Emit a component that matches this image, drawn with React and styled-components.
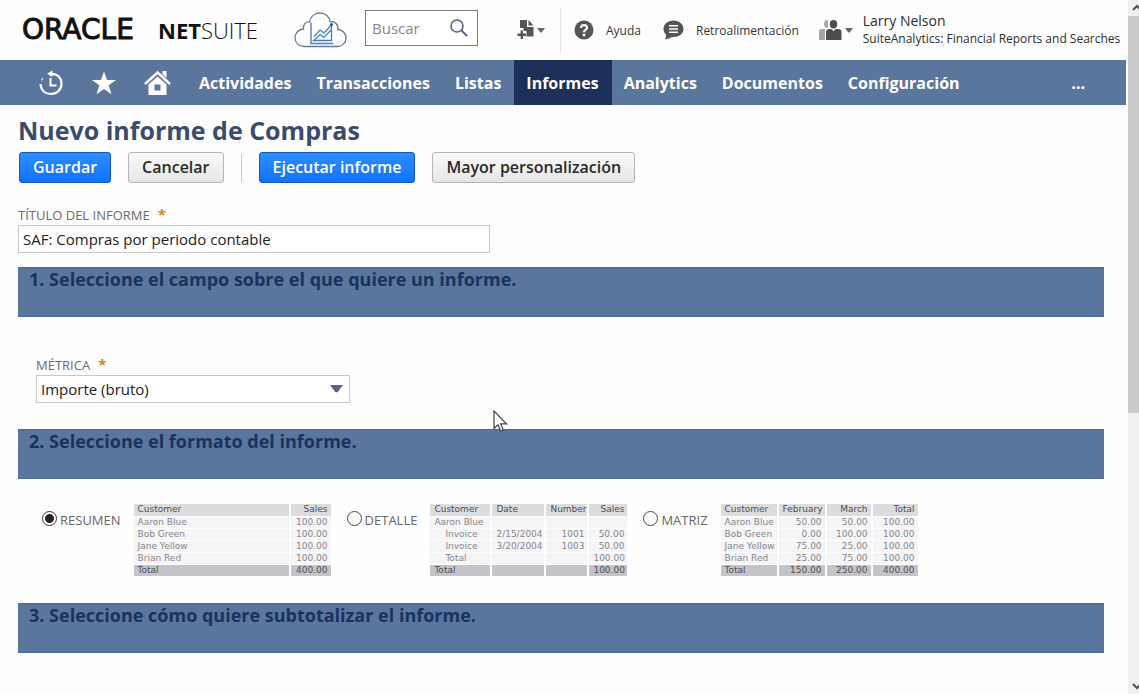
import React, { useState } from "react";
import styled, { createGlobalStyle, css } from "styled-components";

const BAR = "#5b769d";
const NAVY = "#1b3160";

const GlobalStyle = createGlobalStyle`
  * { box-sizing: border-box; }
  body {
    margin: 0;
    background: #fefefe;
    color: #333;
    font-family: "Open Sans", "Noto Sans", sans-serif;
    font-size: 15px;
  }
  button, input, select { font-family: inherit; }
`;

const Page = styled.div`
  display: flex;
  min-height: 100vh;
`;

const Content = styled.div`
  flex: 1;
  min-width: 0;
`;

const Header = styled.header`
  display: flex;
  align-items: center;
  height: 60px;
  padding-left: 22px;
  white-space: nowrap;
`;

const Logo = styled.a`
  display: flex;
  align-items: center;
  width: 272px;
  color: #111;
  text-decoration: none;
  line-height: 30px;
`;

const Oracle = styled.span`
  width: 136px;
  font-family: "DejaVu Sans", sans-serif;
  font-size: 28px;
  -webkit-text-stroke: 1px #111;
`;

const NetSuite = styled.span`
  font-size: 22px;
  font-weight: 300;
  strong { font-weight: 700; }
`;

const SearchBox = styled.label`
  display: flex;
  align-items: center;
  width: 113px;
  height: 36px;
  margin: 0 0 4px 18px;
  padding: 0 8px 0 6px;
  border: 1px solid #7c7c7c;
  background: #fff;
`;

const SearchInput = styled.input`
  flex: 1;
  min-width: 0;
  padding: 0;
  border: 0;
  outline: 0;
  background: none;
  font-size: 15px;
  &::placeholder { color: #858585; opacity: 1; }
`;

const IconButton = styled.button`
  display: flex;
  align-items: center;
  gap: 3px;
  padding: 0;
  border: 0;
  background: none;
  color: #555;
`;

const CreateButton = styled(IconButton)`
  margin-left: 39px;
`;

const HeaderLink = styled.a`
  display: flex;
  align-items: center;
  gap: 12px;
  height: 46px;
  color: #333;
  font-size: 12px;
  text-decoration: none;
  svg { color: #555; }
`;

const HelpLinks = styled.div`
  display: flex;
  gap: 22px;
  margin-left: 15px;
  padding-left: 13px;
  border-left: 1px solid #e6e6ea;
`;

const User = styled.div`
  display: flex;
  align-items: center;
  gap: 10px;
  margin-left: 20px;
`;

const UserText = styled.div`
  font-size: 12px;
  line-height: 18px;
  color: #2c2c2c;
`;

const UserName = styled.div`
  font-size: 14px;
`;

const Nav = styled.nav`
  display: flex;
  align-items: center;
  height: 45px;
  margin-right: 1px;
  padding-left: 38px;
  background: ${BAR};
  color: #fff;
`;

const NavIcons = styled.div`
  display: flex;
  gap: 28px;
  margin-right: 16px;
`;

const NavIconLink = styled.a`
  display: flex;
  color: #fff;
`;

const NavLink = styled.a`
  padding: 2px 13px 0 12px;
  line-height: 43px;
  font-size: 16px;
  font-weight: 700;
  color: #fff;
  text-decoration: none;
  ${({ $active }) => $active && css`background: #1c3059;`}
`;

const MoreLink = styled(NavLink)`
  margin-left: auto;
  padding: 2px 41px 0;
`;

const Main = styled.main`
  padding: 8px 23px 0 18px;
`;

const Title = styled.h1`
  margin: 0;
  font-size: 25px;
  line-height: 35px;
  font-weight: 700;
  color: #3a4b6c;
`;

const Actions = styled.div`
  display: flex;
  align-items: center;
  gap: 17px;
  margin: 4px 0 22px;
  padding-left: 1px;
`;

const Button = styled.button`
  height: 31px;
  padding: 0 13px;
  border: 1px solid #b5b5b5;
  border-radius: 3px;
  background: linear-gradient(#fafafa, #e5e5e5);
  color: #2a2a2a;
  font-size: 16px;
  font-weight: 600;
  line-height: 29px;
  ${({ $primary }) => $primary && css`
    border-color: #125ab2;
    background: linear-gradient(#2f8cff, #0f72fb);
    color: #fff;
  `}
`;

const Divider = styled.span`
  width: 1px;
  height: 28px;
  background: #c4c4c4;
`;

const Field = styled.div`
  display: flex;
  flex-direction: column;
  align-items: flex-start;
`;

const FieldLabel = styled.label`
  line-height: 20px;
  font-size: 13px;
  color: #6b6b6b;
`;

const Required = styled.span`
  margin-left: 8px;
  color: #cf8618;
  font-weight: 700;
  font-size: 15px;
  line-height: 16px;
`;

const TextInput = styled.input`
  width: 472px;
  max-width: 100%;
  height: 28px;
  margin-bottom: 14px;
  padding: 0 4px;
  border: 1px solid #c9c9cb;
  background: #fff;
  color: #222;
  font-size: 15px;
`;

const SelectWrap = styled.div`
  display: grid;
  align-items: center;
  width: 314px;
  max-width: 100%;
  > * { grid-area: 1 / 1; }
  svg { justify-self: end; margin-right: 7px; pointer-events: none; }
`;

const Select = styled.select`
  width: 100%;
  height: 28px;
  padding: 0 4px;
  appearance: none;
  border: 1px solid #c9c9cb;
  border-radius: 0;
  background: #fff;
  color: #222;
  font-size: 15px;
`;

const SectionBar = styled.h2`
  height: 50px;
  margin: 0;
  padding-left: 11px;
  background: ${BAR};
  border-top: 1px solid #4c6690;
  border-bottom: 1px solid #4a6a97;
  color: ${NAVY};
  font-size: 18px;
  font-weight: 700;
  line-height: 23px;
`;

const MetricBody = styled.div`
  padding: 38px 18px 26px;
`;

const Formats = styled.div`
  display: flex;
  align-items: flex-start;
  gap: 16px;
  padding: 25px 0 26px 24px;
`;

const Format = styled.div`
  display: flex;
  gap: 13px;
`;

const RadioLabel = styled.label`
  display: flex;
  align-items: flex-start;
  gap: 3px;
  padding-top: 6px;
  font-size: 13px;
  line-height: 21px;
  color: #666;
`;

const Radio = styled.input`
  appearance: none;
  width: 15px;
  height: 15px;
  margin: 1px 0 0;
  border: 1px solid #444;
  border-radius: 50%;
  background: #fff;
  &:checked {
    border-color: #333;
    background: radial-gradient(circle, #222 4px, #fff 5px);
  }
`;

const Sample = styled.table`
  width: 197px;
  table-layout: fixed;
  border-collapse: collapse;
  font-family: "DejaVu Sans", sans-serif;
  font-size: 9px;
  line-height: 11px;
  color: #858589;
  white-space: nowrap;
`;

const Cell = styled.td`
  height: 12px;
  padding: 0 3px 0 4px;
  border-bottom: 1px solid #fdfdfe;
  background: #f5f5f8;
  font-weight: 400;
  text-align: ${({ $right }) => ($right ? "right" : "left")};
  ${({ $indent }) => $indent && css`padding-left: 15px;`}
  ${({ $kind }) => $kind && css`
    background: ${$kind === "head" ? "#dcdcdf" : "#c3c3c9"};
    color: #505055;
    & + & { border-left: 2px solid #fdfdfe; }
  `}
`;

const ScrollBar = styled.div`
  display: flex;
  flex-direction: column;
  width: 11px;
  margin-left: 1px;
  background: #f0f0f0;
  color: #505050;
`;

const ScrollArrow = styled.span`
  display: flex;
  align-items: center;
  justify-content: flex-end;
  height: 16px;
`;

const ScrollTrack = styled.div`
  flex: 1;
`;

const ScrollThumb = styled.div`
  height: 60%;
  background: #cbcbcb;
`;

const Pointer = styled.svg`
  position: absolute;
  left: 493px;
  top: 410px;
`;

const Caret = ({ color = "#666", width = 8, height = 5 }) => (
  <svg width={width} height={height} viewBox="0 0 8 5" preserveAspectRatio="none" aria-hidden="true">
    <path d="M0 0h8L4.600 4.600h-1.200z" fill={color} />
  </svg>
);

const CloudIcon = () => (
  <svg width="53" height="36" viewBox="0 0 53 36" fill="none" aria-hidden="true">
    <path
      d="M10 34.500C4.500 34.500 1 30.500 1 25.800C1 21 4.500 17.300 9.500 17C9 12.500 11.500 9.500 15.500 10C16.500 4.500 20.500 1 25.800 1C31.500 1 35.500 4.800 36.300 9.800C41 9 44.500 12.500 43.800 17.500C48.700 18 52 21.500 52 26C52 31 48 34.500 43.500 34.500Z"
      stroke="#5e7f92"
      strokeWidth="1.300"
    />
    <path d="M17 10.500V31.500H39.500" stroke="#587fae" strokeWidth="1.400" />
    <path d="M20 24.500L26 18L30 21L37.500 13V28.500H19.500L26 22.500L30 25.500L37 18" stroke="#3f7fc0" strokeWidth="1.300" />
    <circle cx="37.500" cy="12.500" r="1.500" fill="#2d558a" />
  </svg>
);

const SearchIcon = () => (
  <svg width="20" height="20" viewBox="0 0 20 20" fill="none" stroke="#53638a" aria-hidden="true">
    <circle cx="8" cy="8" r="6" strokeWidth="1.600" />
    <path d="M12.500 12.500L18 18" strokeWidth="2" />
  </svg>
);

const CreateIcon = () => (
  <svg width="17" height="22" viewBox="0 0 17 22" fill="currentColor" aria-hidden="true">
    <path d="M3 1H10V8H16.500V17.500H9.500V12H6.500V9H3Z" />
    <path d="M11.500 1L16.500 6.500H11.500Z" />
    <path d="M3.600 11.500H6V14.500H9V17H6V20H3.600V17H.5V14.500H3.600Z" />
  </svg>
);

const HelpIcon = () => (
  <svg width="20" height="20" viewBox="0 0 20 20" aria-hidden="true">
    <circle cx="10" cy="10" r="9.500" fill="currentColor" />
    <path d="M7 8C7 4.200 13 4.200 13 7.700C13 9.800 10 9.900 10 12.300" fill="none" stroke="#fff" strokeWidth="2.200" />
    <circle cx="10" cy="15" r="1.400" fill="#fff" />
  </svg>
);

const ChatIcon = () => (
  <svg width="21" height="20" viewBox="0 0 21 20" aria-hidden="true">
    <path d="M10.500 .5C16 .5 20.500 4 20.500 9C20.500 13.800 16 17 10.500 17C8 17 5 19.200 2 19.500C3 18 3.200 16.300 2.800 14.500C1.300 13 .5 11 .5 9C.5 4 5 .5 10.500 .5Z" fill="currentColor" />
    <path d="M6 5.800H15M6 9H15M6 12.200H15" stroke="#fff" strokeWidth="1.500" />
  </svg>
);

const PeopleIcon = () => (
  <svg width="23" height="21" viewBox="0 0 23 21" aria-hidden="true">
    <g fill="#a5a5a5">
      <path d="M9 0A4 4 0 0 0 9 8Z" />
      <path d="M0 20V11Q0 9 2.500 9H6V20Z" />
    </g>
    <g fill="#4d4d4d">
      <ellipse cx="14.500" cy="4.200" rx="3.700" ry="4.200" />
      <path d="M7 20V12Q7 9 10.500 9H12L14.500 11L17 9H19Q22.500 9 22.500 12V20Z" />
    </g>
  </svg>
);

const HistoryIcon = () => (
  <svg width="26" height="26" viewBox="0 0 26 26" fill="none" stroke="currentColor" aria-hidden="true">
    <path d="M13 4C19.500 3.500 23.500 8 23.500 13.500C23.500 19.500 19 24 13 24C7.500 24 3 20.500 2.500 14" strokeWidth="2.200" />
    <path d="M9 3.800L14.500 .5V7Z" fill="currentColor" stroke="none" />
    <path d="M12.500 8V15.500H18.500" strokeWidth="2" />
    <path d="M3.500 10.500L5 8" strokeWidth="1.500" opacity=".6" />
  </svg>
);

const StarIcon = () => (
  <svg width="24" height="26" viewBox="0 0 24 26" fill="currentColor" aria-hidden="true">
    <path d="M12 1.500L15 10H24L16.700 15.300L19.500 24.300L12 19L4.500 24.300L7.300 15.300L0 10H9Z" />
  </svg>
);

const HomeIcon = () => (
  <svg width="27" height="26" viewBox="0 0 27 26" aria-hidden="true">
    <path d="M1 14L13.500 2.500L26 14" fill="none" stroke="currentColor" strokeWidth="2.400" />
    <path d="M18.500 1H22.500V8L18.500 4.500Z" fill="currentColor" />
    <path d="M4.500 14.500L13.500 6.500L22.500 14.500V25H4.500Z" fill="currentColor" />
    <rect x="10.500" y="14.500" width="6" height="6" fill="#5b769d" />
  </svg>
);

const Chevron = ({ down }) => (
  <svg width="7" height="8" viewBox="0 0 7 8" fill="none" stroke="currentColor" strokeWidth="2" aria-hidden="true">
    <path d={down ? "M1 2L5 6L9 2" : "M1 6L5 2L9 6"} />
  </svg>
);

const NAV_ITEMS = ["Actividades", "Transacciones", "Listas", "Informes", "Analytics", "Documentos", "Configuración"];

const FORMATS = [
  {
    id: "resumen",
    label: "RESUMEN",
    widths: [156, 41],
    rightFrom: 1,
    rows: [
      ["Customer", "Sales"],
      ["Aaron Blue", "100.00"],
      ["Bob Green", "100.00"],
      ["Jane Yellow", "100.00"],
      ["Brian Red", "100.00"],
      ["Total", "400.00"],
    ],
  },
  {
    id: "detalle",
    label: "DETALLE",
    widths: [61, 54, 43, 39],
    rightFrom: 2,
    indented: [2, 3, 4],
    rows: [
      ["Customer", "Date", "Number", "Sales"],
      ["Aaron Blue", "", "", ""],
      ["Invoice", "2/15/2004", "1001", "50.00"],
      ["Invoice", "3/20/2004", "1003", "50.00"],
      ["Total", "", "", "100.00"],
      ["Total", "", "", "100.00"],
    ],
  },
  {
    id: "matriz",
    label: "MATRIZ",
    widths: [57, 48, 46, 46],
    rightFrom: 1,
    rows: [
      ["Customer", "February", "March", "Total"],
      ["Aaron Blue", "50.00", "50.00", "100.00"],
      ["Bob Green", "0.00", "100.00", "100.00"],
      ["Jane Yellow", "75.00", "25.00", "100.00"],
      ["Brian Red", "25.00", "75.00", "100.00"],
      ["Total", "150.00", "250.00", "400.00"],
    ],
  },
];

const SampleTable = ({ format }) => {
  const { rows, widths, rightFrom, indented = [] } = format;
  const last = rows.length - 1;
  const renderRow = (row, r) => (
    <tr key={r}>
      {row.map((text, c) => (
        <Cell
          key={c}
          as={r === 0 ? "th" : "td"}
          $kind={r === 0 ? "head" : r === last ? "total" : undefined}
          $right={c >= rightFrom}
          $indent={c === 0 && indented.includes(r)}
        >
          {text}
        </Cell>
      ))}
    </tr>
  );
  return (
    <Sample>
      <colgroup>
        {widths.map((w, i) => <col key={i} width={w} />)}
      </colgroup>
      <thead>{renderRow(rows[0], 0)}</thead>
      <tbody>{rows.slice(1).map((row, i) => renderRow(row, i + 1))}</tbody>
    </Sample>
  );
};

export default function App() {
  const [title, setTitle] = useState("SAF: Compras por periodo contable");
  const [format, setFormat] = useState("resumen");

  return (
    <>
      <GlobalStyle />
      <Page>
        <Content>
          <Header>
            <Logo href="#inicio">
              <Oracle>ORACLE</Oracle>
              <NetSuite><strong>NET</strong>SUITE</NetSuite>
            </Logo>
            <CloudIcon />
            <SearchBox>
              <SearchInput type="text" placeholder="Buscar" aria-label="Buscar" />
              <SearchIcon />
            </SearchBox>
            <CreateButton type="button" aria-label="Crear nuevo">
              <CreateIcon />
              <Caret />
            </CreateButton>
            <HelpLinks>
              <HeaderLink href="#ayuda"><HelpIcon />Ayuda</HeaderLink>
              <HeaderLink href="#retro"><ChatIcon />Retroalimentación</HeaderLink>
            </HelpLinks>
            <User>
              <IconButton type="button" aria-label="Cambiar de rol">
                <PeopleIcon />
                <Caret />
              </IconButton>
              <UserText>
                <UserName>Larry Nelson</UserName>
                SuiteAnalytics: Financial Reports and Searches
              </UserText>
            </User>
          </Header>

          <Nav>
            <NavIcons>
              <NavIconLink href="#recientes" aria-label="Recientes"><HistoryIcon /></NavIconLink>
              <NavIconLink href="#favoritos" aria-label="Favoritos"><StarIcon /></NavIconLink>
              <NavIconLink href="#inicio" aria-label="Inicio"><HomeIcon /></NavIconLink>
            </NavIcons>
            {NAV_ITEMS.map((item) => (
              <NavLink key={item} href="#menu" $active={item === "Informes"}>{item}</NavLink>
            ))}
            <MoreLink href="#mas">...</MoreLink>
          </Nav>

          <Main>
            <Title>Nuevo informe de Compras</Title>
            <Actions>
              <Button type="button" $primary>Guardar</Button>
              <Button type="button">Cancelar</Button>
              <Divider />
              <Button type="button" $primary>Ejecutar informe</Button>
              <Button type="button">Mayor personalización</Button>
            </Actions>

            <Field>
              <FieldLabel htmlFor="titulo">TÍTULO DEL INFORME<Required>*</Required></FieldLabel>
              <TextInput id="titulo" type="text" value={title} onChange={(e) => setTitle(e.target.value)} />
            </Field>

            <SectionBar>1. Seleccione el campo sobre el que quiere un informe.</SectionBar>
            <MetricBody>
              <Field>
                <FieldLabel htmlFor="metrica">MÉTRICA<Required>*</Required></FieldLabel>
                <SelectWrap>
                  <Select id="metrica"><option>Importe (bruto)</option></Select>
                  <Caret color="#625f8c" width={13} height={8} />
                </SelectWrap>
              </Field>
            </MetricBody>

            <SectionBar>2. Seleccione el formato del informe.</SectionBar>
            <Formats>
              {FORMATS.map((f) => (
                <Format key={f.id}>
                  <RadioLabel>
                    <Radio type="radio" name="formato" checked={format === f.id} onChange={() => setFormat(f.id)} />
                    {f.label}
                  </RadioLabel>
                  <SampleTable format={f} />
                </Format>
              ))}
            </Formats>

            <SectionBar>3. Seleccione cómo quiere subtotalizar el informe.</SectionBar>
          </Main>
        </Content>

        <ScrollBar aria-hidden="true">
          <ScrollArrow><Chevron /></ScrollArrow>
          <ScrollTrack><ScrollThumb /></ScrollTrack>
          <ScrollArrow><Chevron down /></ScrollArrow>
        </ScrollBar>
      </Page>
      <Pointer width="15" height="22" viewBox="0 0 15 22" aria-hidden="true">
        <path d="M1 1V18.500L5 14.700L7.700 21L10.300 20L7.700 13.800H13.500Z" fill="#fff" stroke="#444" strokeWidth="1.200" />
      </Pointer>
    </>
  );
}
